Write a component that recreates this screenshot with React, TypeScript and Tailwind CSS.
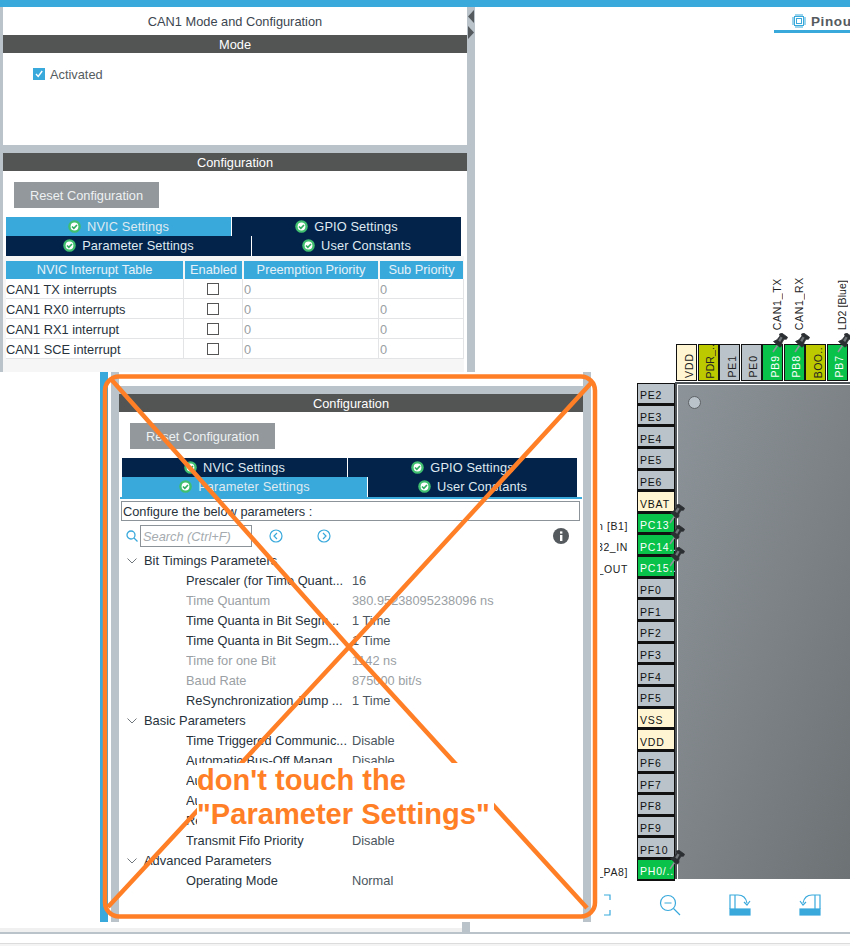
import React from "react";

const CheckDot = () => (
  <svg width="13" height="13" viewBox="0 0 12 12" className="shrink-0">
    <circle cx="6" cy="6" r="5.8" fill="#3fbf6f" />
    <circle cx="6" cy="6" r="3.6" fill="#ffffff" />
    <path d="M3.7 6l1.7 1.7 2.9-3.1" fill="none" stroke="#2fae5f" strokeWidth="1.5" />
  </svg>
);

const Tab = ({ label, active, className }: { label: string; active?: boolean; className: string }) => (
  <div className={`flex items-center justify-center gap-[6px] text-[12.8px] tracking-[0.12px] text-[#dfe9f0] ${active ? "bg-[#39a9dc]" : "bg-[#03234b]"} ${className}`}>
    <CheckDot />
    <span>{label}</span>
  </div>
);

const Tabs = ({ activeFirst }: { activeFirst: boolean }) => (
  <div className="flex w-[455px] flex-col">
    <div className="flex h-[19px] gap-px">
      <Tab label="NVIC Settings" active={activeFirst} className="w-[225px]" />
      <Tab label="GPIO Settings" className="flex-1" />
    </div>
    <div className="flex h-[20px] gap-px">
      <Tab label="Parameter Settings" active={!activeFirst} className="w-[245px] pb-px" />
      <Tab label="User Constants" className="flex-1 pb-px" />
    </div>
  </div>
);

const Header = ({ children }: { children: string }) => (
  <div className="flex h-[18px] items-center justify-center bg-[#535554] pt-px text-[12.8px] text-white">{children}</div>
);

const ResetButton = () => (
  <div className="flex h-[26px] w-[145px] items-center justify-center bg-[#92989c] pt-px text-[12.8px] text-[#eef1f2]">Reset Configuration</div>
);

const rows = ["CAN1 TX interrupts", "CAN1 RX0 interrupts", "CAN1 RX1 interrupt", "CAN1 SCE interrupt"];

const NvicTable = () => (
  <div className="w-[461px] bg-[#f6f6f6] pb-[13px] pl-[3px] pt-[5px]">
    <div className="flex h-[18px] gap-[2px] text-[12.8px] text-[#e6f1f7]">
      <div className="flex w-[177px] items-center justify-center bg-[#39a9dc]">NVIC Interrupt Table</div>
      <div className="flex w-[57px] items-center justify-center bg-[#39a9dc]">Enabled</div>
      <div className="flex w-[134px] items-center justify-center bg-[#39a9dc]">Preemption Priority</div>
      <div className="flex w-[83px] items-center justify-center bg-[#39a9dc]">Sub Priority</div>
    </div>
    {rows.map((r) => (
      <div key={r} className="flex h-[20px] w-[458px] items-center border-b border-[#e2e4e5] bg-white text-[12.8px] text-[#27323c]">
        <div className="flex h-full w-[178px] items-center border-r border-[#e2e4e5] pt-[2px]">{r}</div>
        <div className="flex h-full w-[59px] items-center justify-center border-r border-[#e2e4e5]">
          <div className="h-[12px] w-[12px] border border-[#555]" />
        </div>
        <div className="flex h-full w-[136px] items-center border-r border-[#e2e4e5] pl-[1px] pt-[2px] text-[#9aa0a4]">0</div>
        <div className="flex h-full flex-1 items-center border-r border-[#e2e4e5] pl-[1px] pt-[2px] text-[#9aa0a4]">0</div>
      </div>
    ))}
  </div>
);

type Row = { l: string; v?: string; dim?: boolean; group?: boolean };
const tree: Row[] = [
  { l: "Bit Timings Parameters", group: true },
  { l: "Prescaler (for Time Quant...", v: "16" },
  { l: "Time Quantum", v: "380.95238095238096 ns", dim: true },
  { l: "Time Quanta in Bit Segm...", v: "1 Time" },
  { l: "Time Quanta in Bit Segm...", v: "1 Time" },
  { l: "Time for one Bit", v: "1142 ns", dim: true },
  { l: "Baud Rate", v: "875000 bit/s", dim: true },
  { l: "ReSynchronization Jump ...", v: "1 Time" },
  { l: "Basic Parameters", group: true },
  { l: "Time Triggered Communic...", v: "Disable" },
  { l: "Automatic Bus-Off Manag...", v: "Disable" },
  { l: "Automatic Wake-Up Mode", v: "Disable" },
  { l: "Automatic Retransmission", v: "Disable" },
  { l: "Receive Fifo Locked Mode", v: "Disable" },
  { l: "Transmit Fifo Priority", v: "Disable" },
  { l: "Advanced Parameters", group: true },
  { l: "Operating Mode", v: "Normal" },
];

const TreeRow = ({ r }: { r: Row }) =>
  r.group ? (
    <div className="flex h-[20px] items-center pt-px text-[12.9px] text-[#27323c]">
      <svg width="10" height="6" viewBox="0 0 10 6" className="ml-[8px] mr-[7px]">
        <path d="M0.5 0.5L5 5l4.5-4.5" fill="none" stroke="#70787d" strokeWidth="1" />
      </svg>
      {r.l}
    </div>
  ) : (
    <div className={`flex h-[20px] items-center whitespace-nowrap pl-[67px] pt-px text-[12.8px] ${r.dim ? "text-[#9aa0a4]" : "text-[#27323c]"}`}>
      <span className="w-[166px] overflow-hidden">{r.l}</span>
      <span className={r.dim ? "" : "text-[#4c565e]"}>{r.v}</span>
    </div>
  );

const NavArrow = ({ d }: { d: string }) => (
  <svg width="14" height="14" viewBox="0 0 14 14">
    <circle cx="7" cy="7" r="6" fill="none" stroke="#39a9dc" strokeWidth="1.2" />
    <path d={d} fill="none" stroke="#39a9dc" strokeWidth="1.2" />
  </svg>
);

const Pushpin = ({ className }: { className: string }) => (
  <svg width="16" height="20" viewBox="0 0 16 20" className={`absolute z-10 ${className}`}>
    <path d="M1 19L5.5 12.5" stroke="#8f959a" strokeWidth="1.6" />
    <path d="M1.5 8.5L5 6.8 8 3 7.5 1 10 0.3 15.5 4.2 14.5 6.2 12 6.2 9.8 10 10 12.5 8 14.2z" fill="#2c2f32" stroke="#2c2f32" strokeWidth="0.8" />
    <path d="M8.6 3.4L10.6 4.8 8.2 9 6.2 7.4z" fill="#6f7579" />
  </svg>
);

const topPins = [
  { n: "VDD", c: "bg-[#fff5d2] text-[#222] tracking-[0.9px]" },
  { n: "PDR_..", c: "bg-[#bcc900] text-[#222] tracking-[0.1px]" },
  { n: "PE1", c: "bg-[#b9c3c9] text-[#222] tracking-[0.9px]" },
  { n: "PE0", c: "bg-[#b9c3c9] text-[#222] tracking-[0.9px]" },
  { n: "PB9", c: "bg-[#08c24a] text-white tracking-[0.9px]", label: "CAN1_TX", lt: "tracking-[0.7px]", pin: true },
  { n: "PB8", c: "bg-[#08c24a] text-white tracking-[0.9px]", label: "CAN1_RX", lt: "tracking-[0.7px]", pin: true },
  { n: "BOO..", c: "bg-[#bcc900] text-[#222] tracking-[0.4px]" },
  { n: "PB7", c: "bg-[#08c24a] text-white tracking-[0.9px]", label: "LD2 [Blue]", lt: "tracking-[0.1px]", pin: true },
];

const G = "bg-[#b9c3c9] text-[#111]";
const Y = "bg-[#fff5d2] text-[#111]";
const N = "bg-[#08c24a] text-white";
const leftPins: { n: string; c: string; label?: string; pin?: boolean }[] = [
  { n: "PE2", c: G },
  { n: "PE3", c: G },
  { n: "PE4", c: G },
  { n: "PE5", c: G },
  { n: "PE6", c: G },
  { n: "VBAT", c: Y },
  { n: "PC13", c: N, label: "n [B1]", pin: true },
  { n: "PC14..", c: N, label: "32_IN", pin: true },
  { n: "PC15..", c: N, label: "_OUT", pin: true },
  { n: "PF0", c: G },
  { n: "PF1", c: G },
  { n: "PF2", c: G },
  { n: "PF3", c: G },
  { n: "PF4", c: G },
  { n: "PF5", c: G },
  { n: "VSS", c: Y },
  { n: "VDD", c: Y },
  { n: "PF6", c: G },
  { n: "PF7", c: G },
  { n: "PF8", c: G },
  { n: "PF9", c: G },
  { n: "PF10", c: G },
  { n: "PH0/..", c: N, label: "_PA8]", pin: true },
];

const ToolIcon = ({ children }: { children: React.ReactNode }) => (
  <svg width="22" height="22" viewBox="0 0 22 22" fill="none" stroke="#39a9dc" strokeWidth="1.2">
    {children}
  </svg>
);

export default function App() {
  return (
    <div className="relative flex h-[946px] w-[850px] flex-col overflow-hidden bg-white [font-family:'Liberation_Sans',Arial,sans-serif]">
      <div className="h-[7px] bg-[#39a9dc]" />
      <div className="flex h-[925px]">
        {/* left panel */}
        <div className="flex h-[365px] w-[475px] bg-[#b9c3c9]">
          <div className="ml-[3px] flex w-[464px] flex-col gap-[8px]">
            <div className="bg-white">
              <div className="flex h-[28px] items-center justify-center pt-px text-[12.8px] text-[#3c4650]">CAN1 Mode and Configuration</div>
              <Header>Mode</Header>
              <div className="flex h-[92px] items-start gap-[5px] pl-[30px] pt-[15px] text-[12.8px] text-[#555c60]">
                <div className="flex h-[12px] w-[12px] items-center justify-center bg-[#39a9dc]">
                  <svg width="10" height="10" viewBox="0 0 10 10"><path d="M2 5l2.2 2.5L8.2 2" fill="none" stroke="#fff" strokeWidth="1.4" /></svg>
                </div>
                <span className="leading-[13px]">Activated</span>
              </div>
            </div>
            <div className="flex-1 bg-white">
              <Header>Configuration</Header>
              <div className="pl-[11px] pt-[11px]"><ResetButton /></div>
              <div className="pl-[3px] pt-[9px]"><Tabs activeFirst /></div>
              <NvicTable />
            </div>
          </div>
          <div className="flex w-[8px] flex-col items-center gap-[3px] pt-[3px]">
            <svg width="8" height="13" viewBox="0 0 8 13"><path d="M7 0v13L1 6.5z" fill="#555a5e" /></svg>
            <svg width="8" height="13" viewBox="0 0 8 13"><path d="M1 0v13l6-6.5z" fill="#555a5e" /></svg>
          </div>
        </div>

        {/* right panel */}
        <div className="flex flex-1 flex-col">
          <div className="flex h-[26px] justify-end">
            <div className="flex w-[76px] items-start gap-[5px] border-b-[3px] border-[#39a9dc] pl-[18px] pt-[7px] text-[13.5px] font-bold leading-[15px] tracking-[0.6px] whitespace-nowrap text-[#555a5e]">
              <svg width="14" height="14" viewBox="0 0 14 14" className="shrink-0" fill="none" stroke="#39a9dc">
                <rect x="2.5" y="2.5" width="9" height="9" />
                <rect x="4.5" y="4.5" width="5" height="5" />
                <path d="M4 0v2M6 0v2M8 0v2M10 0v2M4 12v2M6 12v2M8 12v2M10 12v2M0 4h2M0 6h2M0 8h2M0 10h2M12 4h2M12 6h2M12 8h2M12 10h2" />
              </svg>
              <span>Pinout</span>
            </div>
          </div>

          {/* top pins */}
          <div className="flex h-[348px] items-end gap-[0.5px] pl-[201px]">
            {topPins.map((p) => (
              <div key={p.n} className="relative h-[37px] w-[21px] shrink-0">
                {p.label && (
                  <div className={`absolute bottom-[51px] left-[9px] rotate-180 whitespace-nowrap text-[10.5px] leading-[12px] text-[#222] [writing-mode:vertical-rl] ${p.lt}`}>{p.label}</div>
                )}
                {p.pin && <Pushpin className="-top-[11px] left-[10px]" />}
                <div className={`flex h-full w-full items-end justify-center border border-[#111] pb-[2px] pl-[4px] text-[10.5px] leading-[12px] ${p.c}`}>
                  <span className="rotate-180 whitespace-nowrap [writing-mode:vertical-rl]">{p.n}</span>
                </div>
              </div>
            ))}
          </div>

          {/* chip */}
          <div className="mt-px flex h-[497px] pl-[162px]">
            <div className="flex w-[38px] flex-col pt-px">
              {leftPins.map((p) => (
                <div key={p.n + p.c} className={`relative flex h-[21.65px] shrink-0 items-center border border-b-2 border-[#111] pl-[2px] pt-[4px] text-[10.5px] leading-[12px] tracking-[0.8px] whitespace-nowrap ${p.c}`}>
                  {p.n}
                  {p.label && (
                    <span className="absolute right-[46px] top-[6px] text-[10.5px] leading-[12px] tracking-[0.6px] text-[#222]">{p.label}</span>
                  )}
                  {p.pin && <Pushpin className="left-[31px] -top-[10px]" />}
                </div>
              ))}
            </div>
            <div className="relative flex-1 border-l-[2px] border-t-[2px] border-[#4d5257]">
              <div className="h-full w-full border-l border-t border-white bg-gradient-to-br from-[#8d9499] to-[#6d7275] pl-[10px] pt-[11px]">
                <div className="h-[13px] w-[13px] rounded-full border border-[#5d6266] bg-[#b9c3c9]" />
              </div>
            </div>
          </div>

          {/* toolbar */}
          <div className="flex h-[52px] items-center gap-[48px] pl-[114px]">
            <ToolIcon><path d="M15 1h6v5M21 16v5h-6M7 1H1v5M1 16v5h6" /></ToolIcon>
            <ToolIcon>
              <circle cx="9" cy="9" r="7.5" />
              <path d="M14.5 14.5L21 21M5.5 9h7" />
            </ToolIcon>
            <ToolIcon>
              <path d="M1 15V1h5v14M6 1h3c5 0 8 3 9 8" />
              <path d="M15 8l3 3 3-4" />
              <rect x="1" y="15" width="20" height="6" fill="#39a9dc" />
            </ToolIcon>
            <ToolIcon>
              <path d="M21 15V1h-5v14M16 1h-3c-5 0-8 3-9 8" />
              <path d="M7 8l-3 3-3-4" />
              <rect x="1" y="15" width="20" height="6" fill="#39a9dc" />
            </ToolIcon>
          </div>
        </div>
      </div>

      {/* footer */}
      <div className="h-[2px] bg-[#b9c3c9]" />
      <div className="h-[9px] bg-white" />
      <div className="flex-1 border-t border-[#dcdcdc] bg-[#f4f4f4]" />

      {/* pasted screenshot lying over the page */}
      <div className="absolute left-[100px] top-[372px] flex h-[550px] w-[500px] bg-white">
        <div className="w-[8px] bg-[#39a9dc]" />
        <div className="ml-[3px] w-[8px] bg-[#b9c3c9]" />
        <div className="flex w-[464px] flex-col">
          <div className="h-[14px] bg-white" />
          <div className="h-[8px] bg-[#b9c3c9]" />
          <Header>Configuration</Header>
          <div className="ml-[11px] mt-[11px]"><ResetButton /></div>
          <div className="ml-[3px] mt-[9px]"><Tabs activeFirst={false} /></div>
          <div className="ml-px mr-px h-[2px] bg-[#39a9dc]" />
          <div className="ml-[2px] mr-[3px] mt-[2px] flex h-[20px] items-center border border-[#8d9499] pl-px pt-px text-[12.8px] text-[#27323c]">Configure the below parameters :</div>
          <div className="mt-[4px] flex h-[22px] items-center pl-[7px]">
            <svg width="12" height="12" viewBox="0 0 12 12" fill="none" stroke="#39a9dc" strokeWidth="1.3">
              <circle cx="5" cy="5" r="4" />
              <path d="M8 8l3.5 3.5" />
            </svg>
            <div className="ml-[2px] flex h-[22px] w-[112px] items-center border border-[#8d9499] pl-[2px] pt-px text-[12.8px] italic text-[#a5abaf]">Search (Ctrl+F)</div>
            <div className="ml-[17px]"><NavArrow d="M8 4L5 7l3 3" /></div>
            <div className="ml-[34px]"><NavArrow d="M6 4l3 3-3 3" /></div>
            <svg width="16" height="16" viewBox="0 0 16 16" className="ml-[222px]">
              <circle cx="8" cy="8" r="8" fill="#555a5e" />
              <rect x="7" y="7" width="2.4" height="6" fill="#fff" />
              <rect x="7" y="3.4" width="2.4" height="2.2" fill="#fff" />
            </svg>
          </div>
          <div className="mt-[3px]">
            {tree.map((r, i) => <TreeRow key={i} r={r} />)}
          </div>
        </div>
        <div className="w-[8px] bg-[#b9c3c9]" />
      </div>

      {/* strip of the page under the pasted screenshot */}
      <div className="absolute left-0 top-[928px] h-[4px] w-[462px] bg-[#f0f0f0]" />
      <div className="absolute left-[462px] top-[922px] h-[10px] w-[8px] bg-[#b9c3c9]" />

      {/* hand-drawn annotation */}
      <svg width="850" height="946" className="absolute left-0 top-0" fill="none" stroke="#ff7f27" strokeWidth="4.5">
        <rect x="105" y="376.5" width="490" height="540" rx="14" />
        <path d="M110 378L349 647L587 908" />
        <path d="M592 382L349 647L108 907" />
      </svg>
      <div className="absolute left-[197px] top-[763px] h-[72px] w-[297px] whitespace-nowrap bg-white text-[29.1px] font-bold leading-[34px] text-[#ff7f27]">
        don't touch the
        <br />
        "Parameter Settings"
      </div>
    </div>
  );
}
